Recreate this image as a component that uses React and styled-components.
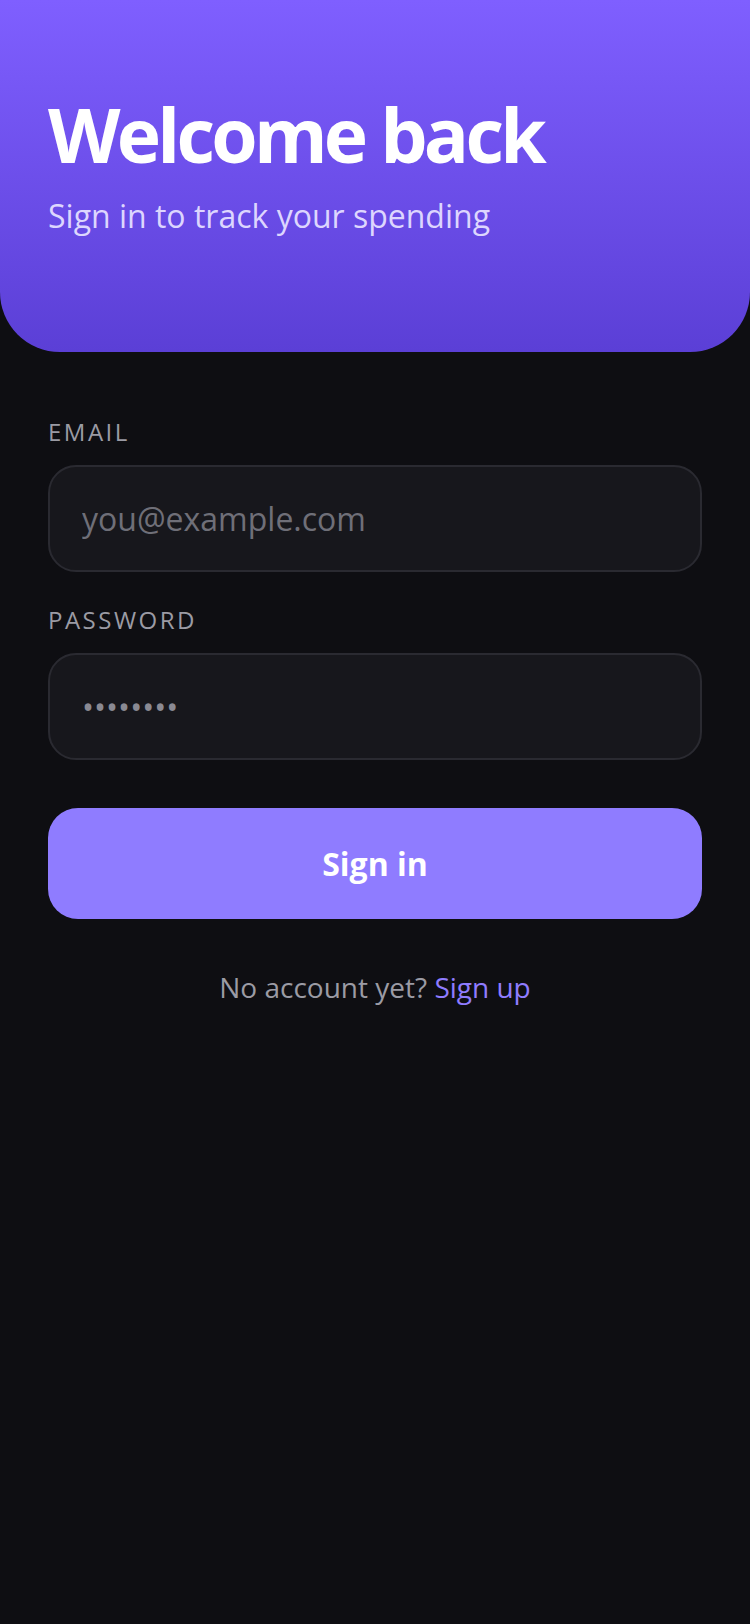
import styled, { createGlobalStyle } from 'styled-components';

const GlobalStyle = createGlobalStyle`
  html, body {
    margin: 0;
    padding: 0;
    background: #0e0e12;
  }
  body {
    font-family: 'Open Sans', 'Noto Sans', sans-serif;
    -webkit-font-smoothing: antialiased;
  }
  * {
    box-sizing: border-box;
  }
`;

const Page = styled.div`
  display: flex;
  flex-direction: column;
  min-height: 1624px;
  background: #0e0e12;
`;

const Hero = styled.header`
  padding: 89px 48px 115px;
  background: linear-gradient(180deg, #7f5fff 0%, #5b3fd6 100%);
  border-radius: 0 0 60px 60px;
`;

const Title = styled.h1`
  margin: 0;
  font-size: 75px;
  font-weight: 700;
  line-height: 1.2;
  letter-spacing: -0.05em;
  color: #ffffff;
`;

const Subtitle = styled.p`
  margin: 16px 0 0;
  font-size: 32px;
  line-height: 1.3;
  color: #ddd6fe;
`;

const Form = styled.form`
  display: flex;
  flex-direction: column;
  padding: 64px 48px 0;
`;

const Field = styled.label`
  display: flex;
  flex-direction: column;
  gap: 18px;
  margin-bottom: ${({ last }) => (last ? '48px' : '32px')};
`;

const Label = styled.span`
  font-size: 24px;
  line-height: 1.3;
  letter-spacing: 2.5px;
  text-transform: uppercase;
  color: #9b9ba4;
`;

const Input = styled.input`
  height: 107px;
  padding: 0 32px;
  border: 2px solid #2a2a31;
  border-radius: 28px;
  background: #17171c;
  font-family: inherit;
  font-size: 32px;
  color: #8a8a93;
  outline: none;

  &::placeholder {
    color: #6f6f78;
  }
`;

const Button = styled.button`
  height: 111px;
  border: none;
  border-radius: 30px;
  background: #8f7cff;
  font-family: inherit;
  font-size: 32px;
  font-weight: 700;
  color: #ffffff;
  cursor: pointer;
`;

const Footer = styled.p`
  margin: 50px 0 0;
  text-align: center;
  font-size: 28px;
  line-height: 1.3;
  color: #9b9ba4;
`;

const Link = styled.a`
  color: #8f7cff;
  text-decoration: none;
`;

export default function App() {
  return (
    <Page>
      <GlobalStyle />
      <Hero>
        <Title>Welcome back</Title>
        <Subtitle>Sign in to track your spending</Subtitle>
      </Hero>
      <Form onSubmit={(e) => e.preventDefault()}>
        <Field>
          <Label>Email</Label>
          <Input type="email" placeholder="you@example.com" />
        </Field>
        <Field last>
          <Label>Password</Label>
          <Input type="password" defaultValue="password" />
        </Field>
        <Button type="submit">Sign in</Button>
        <Footer>
          No account yet? <Link href="#">Sign up</Link>
        </Footer>
      </Form>
    </Page>
  );
}
